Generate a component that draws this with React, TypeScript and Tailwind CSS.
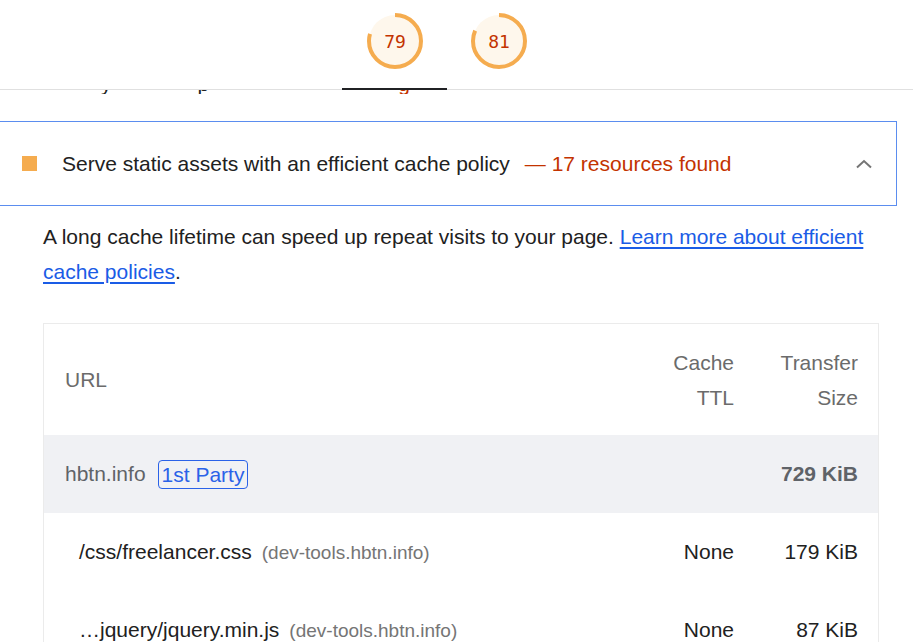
import React from "react";

function Gauge({ score }: { score: number }) {
  const r = 26;
  const C = 2 * Math.PI * r;
  return (
    <div className="relative w-[56px] h-[56px]">
      <svg width="56" height="56" viewBox="0 0 56 56">
        <circle cx="28" cy="28" r="26" fill="#fef7ec" />
        <circle
          cx="28"
          cy="28"
          r="26"
          fill="none"
          stroke="#f5ac4f"
          strokeWidth="4"
          strokeDasharray={`${(score / 100) * C} ${C}`}
          transform="rotate(-90 28 28)"
        />
      </svg>
      <div className="absolute inset-0 flex items-center justify-center font-['DejaVu_Sans_Mono',monospace] text-[18px] text-[#c33300]">
        {score}
      </div>
    </div>
  );
}

export default function App() {
  return (
    <div className="h-[642px] w-[913px] overflow-hidden bg-white font-['Liberation_Sans',Arial,sans-serif] text-[21px] text-[#212121]">
      {/* sticky header */}
      <div className="relative h-[90px] border-b border-[#e0e0e0] bg-white">
        <div className="flex gap-[48px] pl-[367px] pt-[13px]">
          <Gauge score={79} />
          <Gauge score={81} />
        </div>
        <div className="absolute left-[342px] top-[88px] h-[2px] w-[105px] bg-[#202124]" />
      </div>

      {/* text peeking under header */}
      <div className="relative h-[4px] overflow-hidden">
        <div className="absolute left-0 top-[-17px] flex text-[21px] leading-[22px] text-[#212121]">
          <span className="ml-[101px]">y</span>
          <span className="ml-[86px]">p</span>
          <span className="ml-[189px] text-[#c33300]">g</span>
        </div>
      </div>

      {/* audit header box */}
      <div className="-ml-px mt-[27px] flex h-[85px] w-[898px] items-center border border-[#5b8def] pl-[22px] pr-[23px]">
        <div className="h-[15px] w-[15px] bg-[#f5ac4f]" />
        <div className="ml-[25px] flex-1">
          <span>Serve static assets with an efficient cache policy</span>
          <span className="ml-[15px] text-[#c33300]">— 17 resources found</span>
        </div>
        <svg width="18" height="12" viewBox="0 0 18 12">
          <polyline points="2,9.5 9,3 16,9.5" fill="none" stroke="#757575" strokeWidth="2" />
        </svg>
      </div>

      {/* description */}
      <div className="ml-[43px] mt-[13px] w-[835px] leading-[35px] text-[#212121]">
        A long cache lifetime can speed up repeat visits to your page.{" "}
        <a className="text-[#1a5ce6] underline underline-offset-[3px]">
          Learn more about efficient cache policies
        </a>
        .
      </div>

      {/* table */}
      <div className="ml-[43px] mt-[34px] w-[836px] border border-[#ebebeb]">
        <div className="flex h-[111px] items-center leading-[35px] text-[#6b6b6b]">
          <div className="flex-1 pl-[21px]">URL</div>
          <div className="w-[100px] pr-[21px] text-right">
            Cache
            <br />
            TTL
          </div>
          <div className="w-[123px] pr-[20px] text-right">
            Transfer
            <br />
            Size
          </div>
        </div>

        <div className="flex h-[78px] items-center bg-[#f0f1f4]">
          <div className="flex flex-1 items-center pl-[21px]">
            <span className="text-[#5f6368]">hbtn.info</span>
            <span className="ml-[12px] rounded-[4px] border border-[#2a62e8] px-[3px] leading-[27px] text-[#2a62e8]">
              1st Party
            </span>
          </div>
          <div className="w-[100px] pr-[21px] text-right" />
          <div className="w-[123px] pr-[20px] text-right font-bold text-[#5f6368]">729 KiB</div>
        </div>

        <div className="flex h-[78px] items-center">
          <div className="flex flex-1 items-baseline pl-[35px]">
            <span>/css/freelancer.css</span>
            <span className="ml-[10px] text-[19px] text-[#757575]">(dev-tools.hbtn.info)</span>
          </div>
          <div className="w-[100px] pr-[21px] text-right">None</div>
          <div className="w-[123px] pr-[20px] text-right">179 KiB</div>
        </div>

        <div className="flex h-[78px] items-center">
          <div className="flex flex-1 items-baseline pl-[35px]">
            <span>…jquery/jquery.min.js</span>
            <span className="ml-[10px] text-[19px] text-[#757575]">(dev-tools.hbtn.info)</span>
          </div>
          <div className="w-[100px] pr-[21px] text-right">None</div>
          <div className="w-[123px] pr-[20px] text-right">87 KiB</div>
        </div>
      </div>
    </div>
  );
}
